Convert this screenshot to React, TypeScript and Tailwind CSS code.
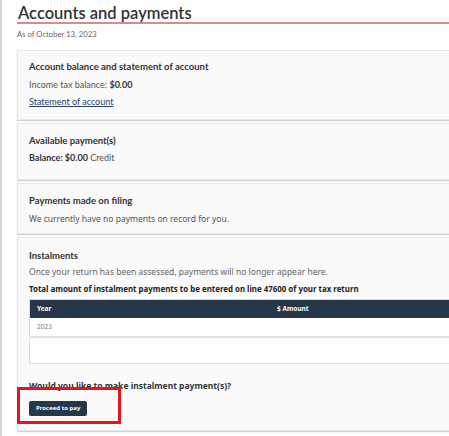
import React from 'react';

const lato = { fontFamily: 'Lato, "Noto Sans", sans-serif' };
const noto = { fontFamily: '"Noto Sans", Lato, sans-serif' };

const Card: React.FC<{ className?: string; children: React.ReactNode }> = ({ className = '', children }) => (
  <section
    className={`bg-[#fafafa] border border-[#e8e8e8] shadow-[0_1px_1px_rgba(0,0,0,0.18)] px-[11px] ${className}`}
  >
    {children}
  </section>
);

const App: React.FC = () => {
  return (
    <div className="relative w-[449px] h-[436px] overflow-hidden bg-white border-l-2 border-[#d4d4d4]">
      <div className="w-[510px] pl-[15px]">
        {/* Page heading */}
        <h1
          className="text-[16.5px] leading-[18px] font-semibold text-[#333] pt-[4px] pl-[1px]"
          style={lato}
        >
          Accounts and payments
        </h1>
        <div className="h-[1.5px] bg-[#d98a8e] w-[434px]" />
        <p className="text-[7.7px] leading-[10px] text-[#666] mt-[5px]" style={lato}>
          As of October 13, 2023
        </p>

        <div className="flex flex-col gap-[3px] mt-[11px]" style={lato}>
          <Card className="pt-[10px] pb-[11px]">
            <h2 className="text-[9.5px] font-bold text-[#333] leading-[12px]">
              Account balance and statement of account
            </h2>
            <p className="text-[9px] text-[#555] leading-[12px] mt-[6px]">
              Income tax balance: <b className="text-[#333]">$0.00</b>
            </p>
            <a href="#" className="block text-[9px] text-[#284162] underline leading-[12px] mt-[5px]">
              Statement of account
            </a>
          </Card>

          <Card className="pt-[11px] pb-[15px]">
            <h2 className="text-[9.5px] font-bold text-[#333] leading-[12px]">Available payment(s)</h2>
            <p className="text-[9px] text-[#555] leading-[12px] mt-[5px]">
              <b className="text-[#333]">Balance: $0.00</b> Credit
            </p>
          </Card>

          <Card className="pt-[11px] pb-[8px]">
            <h2 className="text-[9.5px] font-bold text-[#333] leading-[12px]">Payments made on filing</h2>
            <p className="text-[8.5px] text-[#555] leading-[12px] mt-[6px]" style={noto}>
              We currently have no payments on record for you.
            </p>
          </Card>

          <Card className="pt-[12px] pb-[14px]">
            <h2 className="text-[9.5px] font-bold text-[#333] leading-[12px]">Instalments</h2>
            <p className="text-[8.5px] text-[#666] leading-[12px] mt-[4px]" style={noto}>
              Once your return has been assessed, payments will no longer appear here.
            </p>
            <p className="text-[7.9px] font-bold text-[#222] leading-[12px] mt-[5px]" style={noto}>
              Total amount of instalment payments to be entered on line 47600 of your tax return
            </p>

            <table className="w-[486px] mt-[4px] border border-[#ddd] border-collapse" style={noto}>
              <thead>
                <tr className="bg-[#26374a] text-white text-[6.5px] font-bold h-[19px]">
                  <th className="text-left pl-[7px] w-1/2">Year</th>
                  <th className="text-left pl-[5px]">$ Amount</th>
                </tr>
              </thead>
              <tbody className="bg-white">
                <tr className="h-[19px] border-b-2 border-[#e2e2e2]">
                  <td className="text-[6.5px] text-[#777] pl-[7px]">2023</td>
                  <td />
                </tr>
                <tr className="h-[26px]">
                  <td />
                  <td />
                </tr>
              </tbody>
            </table>

            <p className="text-[8.5px] font-bold text-[#333] leading-[12px] mt-[16px]" style={noto}>
              Would you like to make instalment payment(s)?
            </p>
            <button
              className="mt-[2px] h-[15px] px-[7px] rounded-[2px] bg-[#26374a] text-white text-[6px] font-bold"
              style={noto}
            >
              Proceed to pay
            </button>
          </Card>
        </div>
      </div>

      {/* Annotation box */}
      <div className="absolute left-[15px] top-[387px] w-[104px] h-[37px] border-[3px] border-[#e8141c]" />
    </div>
  );
};

export default App;
